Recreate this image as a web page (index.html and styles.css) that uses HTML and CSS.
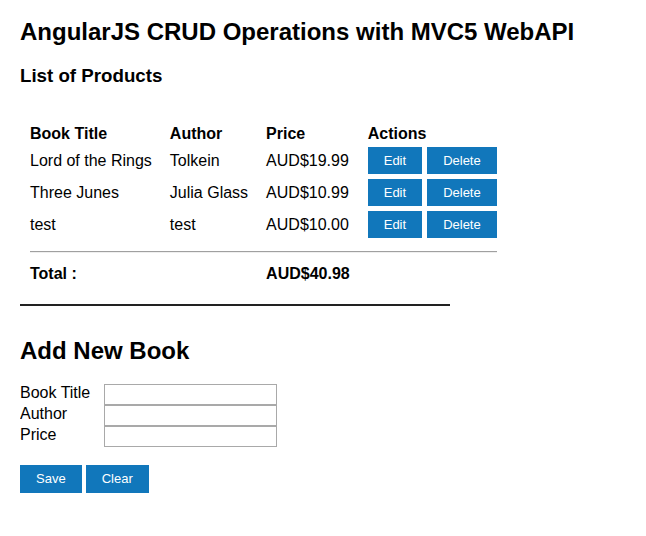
FILE: index.html
```html
<!DOCTYPE html>
<html>
<head>
<meta charset="utf-8">
<title>AngularJS CRUD</title>
<link rel="stylesheet" href="styles.css">
</head>
<body>
<h1 class="title">AngularJS CRUD Operations with MVC5 WebAPI</h1>
<h3 class="subtitle">List of Products</h3>
<table class="products">
  <thead>
    <tr class="head-row"><th>Book Title</th><th>Author</th><th>Price</th><th>Actions</th></tr>
  </thead>
  <tbody>
    <tr class="item-row">
      <td>Lord of the Rings</td><td>Tolkein</td><td>AUD$19.99</td>
      <td><div class="actions"><button class="btn btn-edit">Edit</button><button class="btn btn-del">Delete</button></div></td>
    </tr>
    <tr class="item-row">
      <td>Three Junes</td><td>Julia Glass</td><td>AUD$10.99</td>
      <td><div class="actions"><button class="btn btn-edit">Edit</button><button class="btn btn-del">Delete</button></div></td>
    </tr>
    <tr class="item-row">
      <td>test</td><td>test</td><td>AUD$10.00</td>
      <td><div class="actions"><button class="btn btn-edit">Edit</button><button class="btn btn-del">Delete</button></div></td>
    </tr>
    <tr class="sep-row"><td colspan="4"><hr class="sep"></td></tr>
    <tr class="total-row"><td>Total :</td><td></td><td>AUD$40.98</td><td></td></tr>
  </tbody>
</table>
<div class="divider"></div>
<h2 class="add-title">Add New Book</h2>
<div class="form">
  <label class="lbl" for="t">Book Title</label><input class="field" id="t" type="text">
  <label class="lbl" for="a">Author</label><input class="field" id="a" type="text">
  <label class="lbl" for="p">Price</label><input class="field" id="p" type="text">
</div>
<div class="form-actions">
  <button class="btn btn-form">Save</button><button class="btn btn-form">Clear</button>
</div>
</body>
</html>
```

FILE: styles.css
```css
html, body {
  background: #fff;
}
body {
  margin: 18px 20px;
  font-family: "Liberation Sans", Arial, sans-serif;
  font-size: 16px;
  color: #000;
}
.title {
  font-size: 24px;
  font-weight: bold;
  margin: 0;
}
.subtitle {
  font-size: 18.72px;
  font-weight: bold;
  margin: 19px 0 0;
}
.products {
  margin-top: 34px;
  border-spacing: 2px;
  text-align: left;
}
.products th, .products td {
  padding: 1px 8px;
}
.products th {
  font-weight: bold;
  padding: 2px 8px 0;
}
.item-row td {
  height: 28px;
  line-height: 21px;
  vertical-align: middle;
}
.actions {
  display: flex;
  gap: 5px;
}
.btn {
  font-family: "Liberation Sans", Arial, sans-serif;
  font-size: 13px;
  color: #fff;
  background: #1177bb;
  border: 0;
  border-radius: 0;
  padding: 0 16px;
  margin: 0;
  height: 27px;
  line-height: 27px;
}
.sep {
  margin: 9px 0 8px;
  height: 0;
  border: 0;
  border-top: 1px solid #a0a0a0;
  border-bottom: 1px solid #efefef;
}
.total-row td {
  font-weight: bold;
}
.divider {
  width: 430px;
  border-top: 2px solid #222;
  margin-top: 18px;
}
.add-title {
  font-size: 24px;
  font-weight: bold;
  margin: 31px 0 0;
}
.form {
  margin-top: 19px;
  display: grid;
  grid-template-columns: 84px 173px;
}
.lbl {
  height: 21px;
  line-height: 18px;
}
.field {
  box-sizing: border-box;
  width: 173px;
  height: 21px;
  margin: 0;
  padding: 1px 2px;
  border: 1px solid #a9a9a9;
  font-family: "Liberation Sans", Arial, sans-serif;
  font-size: 13px;
  background: #fff;
}
.form-actions {
  margin-top: 18px;
  display: flex;
  gap: 4px;
}
.btn-form {
  height: 28px;
  line-height: 28px;
}
```
